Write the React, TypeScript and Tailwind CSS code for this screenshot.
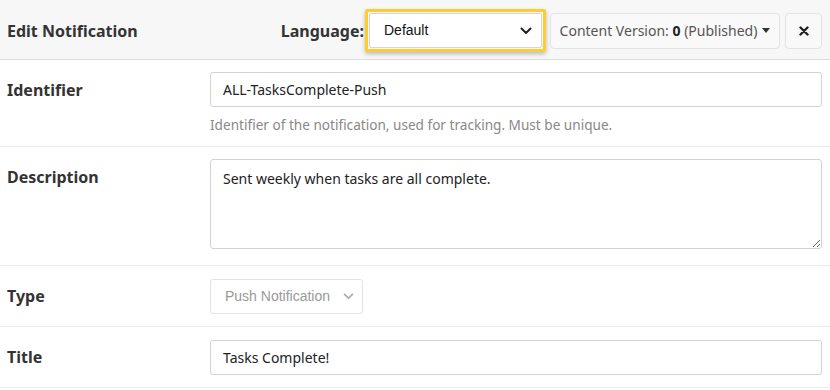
import { useState } from "react";

const ui = { fontFamily: '"Segoe UI", "Noto Sans", "Open Sans", sans-serif' };
const arial = { fontFamily: '"Liberation Sans", Arial, sans-serif' };

function Chevron({ className }: { className?: string }) {
  return (
    <svg viewBox="0 0 12 8" className={className} fill="none" stroke="currentColor" strokeWidth="2" strokeLinecap="round" strokeLinejoin="round">
      <path d="M1.5 1.5 6 6l4.5-4.5" />
    </svg>
  );
}

function Row({ label, children, className, labelClass }: { label: string; children: React.ReactNode; className?: string; labelClass?: string }) {
  return (
    <div className={`flex border-b border-[#ebebeb] ${className ?? ""}`}>
      <div className={`w-[210px] shrink-0 pl-[7px] text-[16px] font-bold text-[#333] ${labelClass ?? ""}`}>{label}</div>
      <div className="flex-1 pr-[8px]">{children}</div>
    </div>
  );
}

export default function App() {
  const [desc, setDesc] = useState("Sent weekly when tasks are all complete.");

  return (
    <div className="h-[390px] w-[830px] overflow-hidden bg-white text-[#333]" style={ui}>
      <div className="flex h-[60px] items-center border-b border-[#dcdcdc] bg-[#f7f7f7] pr-[8px] pt-[2px]">
        <h1 className="pl-[7px] text-[16px] font-bold text-[#333]">Edit Notification</h1>
        <div className="ml-auto flex items-center">
          <span className="mr-[1px] text-[16px] font-bold text-[#333]">Language:</span>
          <div className="rounded-[2px] border-[3px] border-[#fccd33] p-[1px] shadow-[0_2px_4px_rgba(0,0,0,0.25)]">
            <div className="flex h-[35px] w-[173px] items-center rounded-[2px] border border-[#d6d6d6] bg-white pl-[14px] pr-[9px] text-[14px] text-[#111]" style={arial}>
              <span>Default</span>
              <Chevron className="ml-auto h-[8px] w-[12px] text-[#222]" />
            </div>
          </div>
          <button className="ml-[4px] flex h-[36px] w-[230px] items-center justify-center rounded-[4px] border border-[#e3e3e3] bg-[#f9f9f9] text-[14px] text-[#555]">
            Content Version:&nbsp;<b className="text-[#222]">0</b>&nbsp;(Published)
            <span className="ml-[5px] inline-block h-0 w-0 border-x-[4px] border-t-[5px] border-x-transparent border-t-[#333]" />
          </button>
          <button className="ml-[5px] flex h-[36px] w-[37px] items-center justify-center rounded-[4px] border border-[#e3e3e3] bg-[#f9f9f9]">
            <svg viewBox="0 0 10 10" className="h-[10px] w-[10px]" stroke="#222" strokeWidth="2.4" strokeLinecap="round">
              <path d="M1.5 1.5l7 7M8.5 1.5l-7 7" />
            </svg>
          </button>
        </div>
      </div>

      <Row label="Identifier" className="h-[87px] items-start pt-[12px]" labelClass="pt-[6px]">
        <input
          defaultValue="ALL-TasksComplete-Push"
          className="h-[35px] w-full rounded-[3px] border border-[#d3d3d3] px-[12px] text-[14px] text-[#222] outline-none"
        />
        <p className="mt-[8px] text-[13.6px] text-[#888]">Identifier of the notification, used for tracking. Must be unique.</p>
      </Row>

      <Row label="Description" className="h-[119px] pt-[12px]" labelClass="pt-[6px]">
        <textarea
          value={desc}
          onChange={(e) => setDesc(e.target.value)}
          className="block h-[90px] w-full rounded-[3px] border border-[#d3d3d3] px-[12px] py-[8px] text-[14px] text-[#222] outline-none"
        />
      </Row>

      <Row label="Type" className="h-[61px] items-center">
        <div className="flex h-[35px] w-[153px] items-center rounded-[3px] border border-[#e3e3e3] bg-white pl-[14px] pr-[8px] text-[14px] text-[#999]" style={arial}>
          <span>Push Notification</span>
          <Chevron className="ml-auto h-[7px] w-[11px] text-[#aaa]" />
        </div>
      </Row>

      <Row label="Title" className="h-[61px] items-center">
        <input
          defaultValue="Tasks Complete!"
          className="h-[35px] w-full rounded-[3px] border border-[#d3d3d3] px-[12px] text-[14px] text-[#222] outline-none"
        />
      </Row>
    </div>
  );
}
